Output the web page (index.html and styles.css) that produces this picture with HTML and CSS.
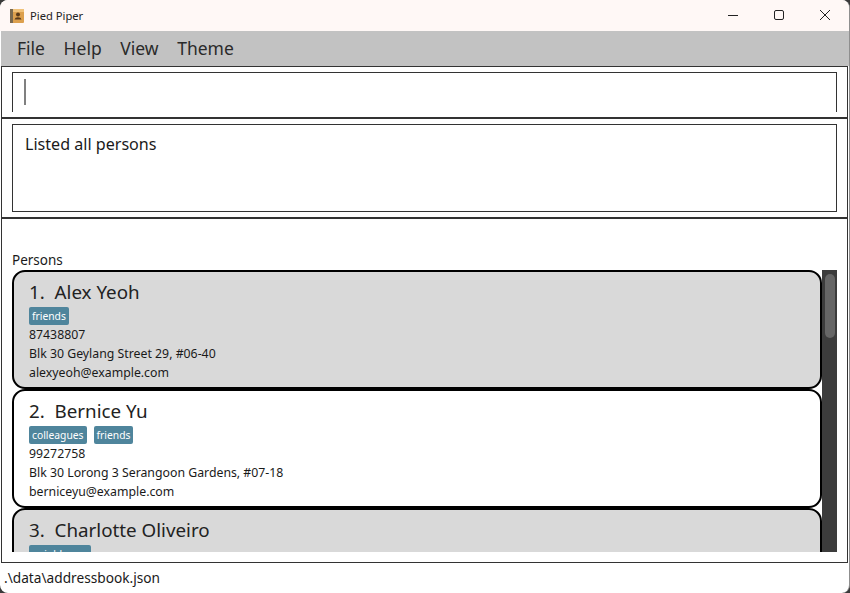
FILE: index.html
```html
<!DOCTYPE html>
<html lang="en">
<head>
<meta charset="utf-8">
<title>Pied Piper</title>
<link rel="stylesheet" href="styles.css">
</head>
<body>
<div class="window">
  <header class="titlebar">
    <svg class="app-icon" width="14" height="14" viewBox="0 0 14 14"><rect x="0" y="0" width="14" height="14" rx="1" fill="#dca04e"/><rect x="0" y="0" width="3" height="14" fill="#7a6a50"/><rect x="3" y="0" width="11" height="3" fill="#f0c27a"/><circle cx="8" cy="5.5" r="2" fill="#5a3a1a"/><path d="M4.5 10.5 Q5 8.2 8 8.2 Q11 8.2 11.5 10.5 Z" fill="#5a3a1a"/></svg>
    <span class="app-title">Pied Piper</span>
    <div class="win-controls">
      <svg width="12" height="12" viewBox="0 0 12 12"><path d="M1 5.5H11" stroke="#222" stroke-width="1" fill="none"/></svg>
      <svg width="12" height="12" viewBox="0 0 12 12"><rect x="1.5" y="0.5" width="9" height="9" rx="1.5" stroke="#222" stroke-width="1" fill="none"/></svg>
      <svg width="12" height="12" viewBox="0 0 12 12"><path d="M1 0L11 10M11 0L1 10" stroke="#222" stroke-width="1" fill="none"/></svg>
    </div>
  </header>
  <nav class="menubar">
    <span class="menu-item">File</span>
    <span class="menu-item">Help</span>
    <span class="menu-item">View</span>
    <span class="menu-item">Theme</span>
  </nav>
  <main class="content">
    <section class="pane pane-command">
      <div class="command-box"><span class="caret"></span></div>
    </section>
    <section class="pane pane-result">
      <div class="result-box">Listed all persons</div>
    </section>
    <section class="pane-list">
      <div class="list-label">Persons</div>
      <div class="list-view">
        <div class="cards">
          <article class="card card-odd">
            <h2 class="card-name">1.&nbsp; Alex Yeoh</h2>
            <div class="tags"><span class="tag">friends</span></div>
            <div class="line">87438807</div>
            <div class="line">Blk 30 Geylang Street 29, #06-40</div>
            <div class="line">alexyeoh@example.com</div>
          </article>
          <article class="card card-even">
            <h2 class="card-name">2.&nbsp; Bernice Yu</h2>
            <div class="tags"><span class="tag">colleagues</span><span class="tag">friends</span></div>
            <div class="line">99272758</div>
            <div class="line">Blk 30 Lorong 3 Serangoon Gardens, #07-18</div>
            <div class="line">berniceyu@example.com</div>
          </article>
          <article class="card card-odd">
            <h2 class="card-name">3.&nbsp; Charlotte Oliveiro</h2>
            <div class="tags"><span class="tag">neighbours</span></div>
          </article>
        </div>
        <div class="scrollbar"><div class="thumb"></div></div>
      </div>
    </section>
  </main>
  <footer class="statusbar">.\data\addressbook.json</footer>
</div>
</body>
</html>
```
FILE: styles.css
```css
* { box-sizing: border-box; }
html, body { margin: 0; padding: 0; background: #3a3a3a; }
body { width: 850px; height: 593px; overflow: hidden; font-family: "Noto Sans", "Open Sans", sans-serif; color: #1a1a1a; }
.window { width: 850px; height: 593px; background: #fff; border-radius: 8px; overflow: hidden; display: flex; flex-direction: column; border-right: 1px solid #8f8f8f; }
.titlebar { height: 31px; flex: none; background: #fff8f6; display: flex; align-items: center; padding: 0 0 0 10px; }
.app-icon { flex: none; }
.app-title { font-size: 11.2px; margin-left: 6px; color: #222; }
.win-controls { margin-left: auto; display: flex; gap: 34px; padding-right: 18px; align-items: center; }
.menubar { height: 35px; flex: none; margin-left: 1px; background: #c2c2c2; display: flex; align-items: center; padding: 0 0 2px 16px; gap: 18.6px; font-size: 17.5px; color: #2a2a2a; }
.content { flex: none; height: 497px; margin-left: 1px; margin-right: 1px; border: 1px solid #333; display: flex; flex-direction: column; background: #fff; }
.pane { flex: none; padding: 5px 10px; border-bottom: 2px solid #333; }
.pane-command { height: 52px; }
.command-box { height: 40px; border: 1px solid #333; border-bottom: 0; padding: 6px 0 0 11px; }
.caret { display: block; width: 2px; height: 26px; background: #808080; }
.pane-result { height: 100px; }
.result-box { height: 88px; border: 1px solid #333; padding: 7px 12px; font-size: 16.1px; line-height: 24px; }
.pane-list { flex: 1; min-height: 0; padding: 32px 10px 10px; display: flex; flex-direction: column; }
.list-label { font-size: 13.5px; line-height: 19px; height: 19px; }
.list-view { flex: 1; min-height: 0; display: flex; overflow: hidden; }
.cards { flex: 1; min-width: 0; overflow: hidden; }
.card { height: 119px; border: 2.5px solid #000; border-radius: 13px; padding: 7px 14px 0 15px; }
.card-odd { background: #d9d9d9; }
.card-even { background: #fff; }
.card-name { margin: 0; font-weight: 400; font-size: 18.8px; line-height: 27px; color: #222; }
.tags { display: flex; gap: 7px; height: 18px; margin-top: 1px; }
.tag { background: #4f859c; color: #fff; font-size: 10.3px; line-height: 18px; padding: 0 3px; border-radius: 2px; }
.line { font-size: 12.3px; line-height: 19px; color: #1a1a1a; }
.scrollbar { flex: none; width: 15px; background: #3c3c3c; padding: 4px 2px 0 3px; }
.thumb { height: 64px; background: #666; border-radius: 5px; }
.statusbar { flex: 1; padding-left: 4px; font-size: 13.7px; line-height: 30px; }
```
